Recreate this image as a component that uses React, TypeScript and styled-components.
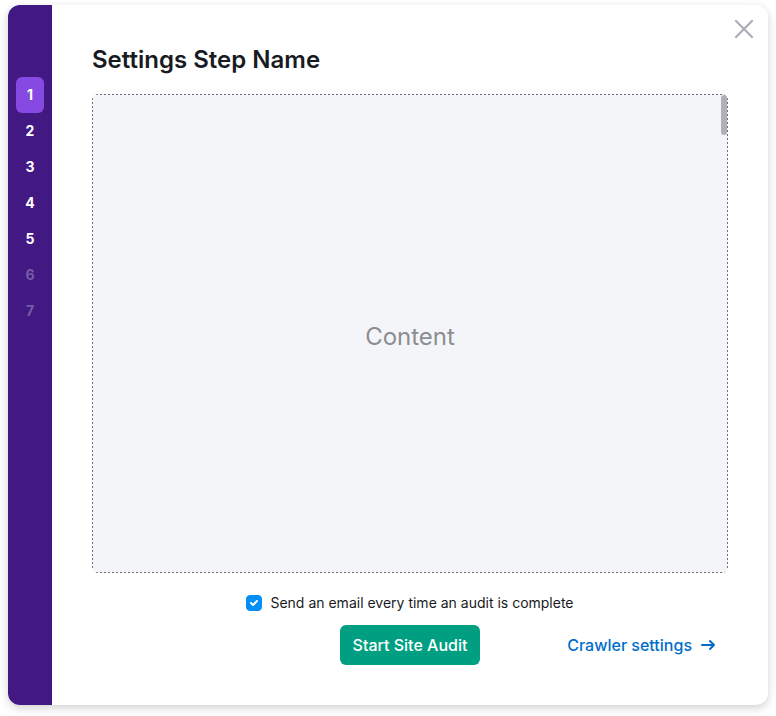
import React, { useState } from "react";
import styled, { createGlobalStyle } from "styled-components";

const GlobalStyle = createGlobalStyle`
  *, *::before, *::after { box-sizing: border-box; }
  body {
    margin: 0;
    background: #fff;
    color: #191b23;
    font-family: Inter, "Liberation Sans", sans-serif;
  }
  button { font: inherit; border: 0; padding: 0; cursor: pointer; }
`;

const Page = styled.div`
  display: flex;
  min-height: 100vh;
  padding: 5px 8px 11px;
`;

const Wizard = styled.main`
  position: relative;
  display: flex;
  flex: 1;
  border-radius: 12px;
  background: #fff;
  box-shadow: 0 3px 8px rgba(25, 27, 35, 0.2);
`;

const Sidebar = styled.nav`
  display: flex;
  flex-direction: column;
  width: 44px;
  padding: 72px 8px 0;
  border-radius: 12px 0 0 12px;
  background: #421983;
`;

const Step = styled.button<{ $active: boolean }>`
  height: 36px;
  border-radius: 6px;
  background: ${(p) => (p.$active ? "#8649e1" : "transparent")};
  color: #fff;
  font-size: 14px;
  font-weight: 700;
  line-height: 20px;
  text-align: center;
  &:disabled { color: rgba(255, 255, 255, 0.3); cursor: default; }
`;

const CloseButton = styled.button`
  position: absolute;
  top: 12px;
  right: 12px;
  display: flex;
  align-items: center;
  justify-content: center;
  width: 24px;
  height: 24px;
  background: none;
  color: #a9abb6;
`;

const Body = styled.section`
  display: flex;
  flex: 1;
  flex-direction: column;
  padding: 40px;
`;

const Title = styled.h1`
  margin: 0 0 20px;
  font-size: 24px;
  font-weight: 600;
  line-height: 29px;
`;

const dashesAcross = "repeating-linear-gradient(90deg, #6c6e79 0 2px, transparent 2px 4px)";
const dashesDown = "repeating-linear-gradient(180deg, #6c6e79 0 2px, transparent 2px 4px)";

const Content = styled.div`
  position: relative;
  display: flex;
  flex: 1;
  align-items: center;
  justify-content: center;
  padding: 7px 1px 1px;
  border-radius: 6px;
  background:
    ${dashesAcross} top / 100% 1px no-repeat,
    ${dashesAcross} bottom / 100% 1px no-repeat,
    ${dashesDown} left / 1px 100% no-repeat,
    ${dashesDown} right / 1px 100% no-repeat,
    #f4f5f9;
  color: #8c8d91;
  font-size: 24px;
  line-height: 32px;
`;

const ScrollThumb = styled.span`
  position: absolute;
  top: 1px;
  right: 1px;
  width: 6px;
  height: 40px;
  border-radius: 4px;
  background: #b0b1b5;
`;

const EmailOption = styled.label`
  display: flex;
  align-items: center;
  justify-content: center;
  gap: 8px;
  margin-top: 20px;
  font-size: 14px;
  line-height: 20px;
`;

const CheckHolder = styled.span`
  position: relative;
  display: flex;
  width: 16px;
  height: 16px;
  svg { position: absolute; inset: 0; pointer-events: none; }
`;

const Checkbox = styled.input`
  appearance: none;
  width: 16px;
  height: 16px;
  margin: 0;
  border: 1px solid #a9abb6;
  border-radius: 4px;
  background: #fff;
  &:checked { border-color: #008ff8; background: #008ff8; }
`;

const Footer = styled.footer`
  display: grid;
  grid-template-columns: 1fr auto 1fr;
  align-items: center;
  margin-top: 12px;
`;

const StartButton = styled.button`
  grid-column: 2;
  height: 40px;
  padding: 0 13px;
  border-radius: 6px;
  background: #009f81;
  color: #fff;
  font-size: 16px;
  font-weight: 500;
`;

const SettingsLink = styled.a`
  display: flex;
  align-items: center;
  justify-self: end;
  gap: 8px;
  margin-right: 12px;
  color: #006dca;
  font-size: 16px;
  font-weight: 500;
  line-height: 24px;
  text-decoration: none;
`;

const steps = [1, 2, 3, 4, 5, 6, 7];
const lastAvailable = 5;

export default function App() {
  const [step, setStep] = useState(1);
  const [email, setEmail] = useState(true);
  return (
    <Page>
      <GlobalStyle />
      <Wizard>
        <Sidebar aria-label="Steps">
          {steps.map((n) => (
            <Step key={n} type="button" $active={n === step} disabled={n > lastAvailable} onClick={() => setStep(n)}>
              {n}
            </Step>
          ))}
        </Sidebar>
        <Body>
          <Title>Settings Step Name</Title>
          <Content>
            Content
            <ScrollThumb />
          </Content>
          <EmailOption>
            <CheckHolder>
              <Checkbox type="checkbox" checked={email} onChange={(e) => setEmail(e.target.checked)} />
              {email && (
                <svg width="16" height="16" viewBox="0 0 16 16" fill="none" stroke="#fff" strokeWidth="2" strokeLinecap="round" strokeLinejoin="round">
                  <path d="M5 8l2 2 4-4" />
                </svg>
              )}
            </CheckHolder>
            Send an email every time an audit is complete
          </EmailOption>
          <Footer>
            <StartButton type="button">Start Site Audit</StartButton>
            <SettingsLink href="#crawler">
              Crawler settings
              <svg width="16" height="16" viewBox="0 0 16 16" fill="none" stroke="currentColor" strokeWidth="2" strokeLinecap="round" strokeLinejoin="round">
                <path d="M2 8h12M10 4l4 4-4 4" />
              </svg>
            </SettingsLink>
          </Footer>
        </Body>
        <CloseButton type="button" aria-label="Close">
          <svg width="20" height="20" viewBox="0 0 20 20" fill="none" stroke="currentColor" strokeWidth="2" strokeLinecap="square">
            <path d="M2 2l16 16M18 2L2 18" />
          </svg>
        </CloseButton>
      </Wizard>
    </Page>
  );
}
